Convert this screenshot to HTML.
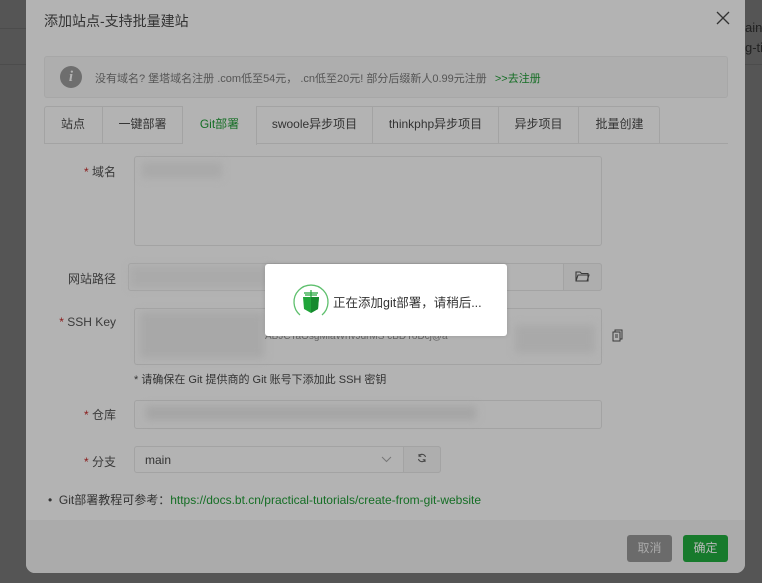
<!DOCTYPE html>
<html><head><meta charset="utf-8"><style>
*{box-sizing:border-box;margin:0;padding:0}
html,body{background:#555}
body{width:762px;height:583px;overflow:hidden;font-family:"Liberation Sans","Noto Sans CJK SC",sans-serif;position:relative;font-size:12px;color:#3a3a3a}
.a{position:absolute}
.bgline{position:absolute;left:0;width:762px;height:1px;background:#4c4c4c}
.dlg{position:absolute;left:26px;top:-10px;width:719px;height:583px;background:#b3b3b3;border-radius:9px;overflow:hidden}
.inp{position:absolute;border:1px solid #a3a3a3;border-radius:3px;background:#b3b3b3}
.blur{position:absolute;background:#a9a9a9;filter:blur(4px)}
.lbl{position:absolute;text-align:right;width:80px;font-size:12px;color:#3a3a3a}
.lbl b{color:#8a1a1a;font-weight:normal}
.tab{position:absolute;top:106px;height:38px;line-height:37px;text-align:center;font-size:12px;border-right:1px solid #a3a3a3;color:#333}
</style></head><body>
<div class="bgline" style="top:28px"></div>
<div class="bgline" style="top:64px"></div>
<div class="a" style="left:745px;top:20px;font-size:13px;color:#222;white-space:nowrap">ain.v</div>
<div class="a" style="left:745px;top:40px;font-size:13px;color:#222;white-space:nowrap">g-ti</div>
<div class="dlg"></div>
<div class="a" style="left:26px;top:520px;width:719px;height:53px;background:#ababab;border-radius:0 0 9px 9px"></div>
<div class="a" style="left:44px;top:11px;font-size:14px;color:#333">添加站点-支持批量建站</div>
<svg class="a" style="left:716px;top:11px" width="14" height="14" viewBox="0 0 14 14"><path d="M1 1L13 13M13 1L1 13" stroke="#333" stroke-width="1.3"/></svg>
<div class="a" style="left:44px;top:56px;width:684px;height:42px;background:#aeaeae;border:1px solid #a7a7a7;border-radius:3px"></div>
<div class="a" style="left:60px;top:66px;width:22px;height:22px;border-radius:50%;background:#6e6e6e;color:#b3b3b3;font:italic bold 15px 'Liberation Serif',serif;text-align:center;line-height:22px">i</div>
<div class="a" style="left:95px;top:70px;font-size:11px;color:#555">没有域名? 堡塔域名注册 .com低至54元， .cn低至20元! 部分后缀新人0.99元注册 <span style="color:#156e25;margin-left:5px">&gt;&gt;去注册</span></div>
<div class="a" style="left:44px;top:106px;width:616px;height:38px;border:1px solid #a3a3a3;border-bottom:none;border-radius:3px 3px 0 0"></div>
<div class="a" style="left:44px;top:143px;width:684px;height:1px;background:#a3a3a3"></div>
<div class="tab" style="left:44px;width:59px">站点</div>
<div class="tab" style="left:103px;width:80px">一键部署</div>
<div class="tab" style="left:183px;width:74px;color:#156e25;background:#b3b3b3;height:39px">Git部署</div>
<div class="tab" style="left:257px;width:116px">swoole异步项目</div>
<div class="tab" style="left:373px;width:126px">thinkphp异步项目</div>
<div class="tab" style="left:499px;width:80px">异步项目</div>
<div class="tab" style="left:579px;width:81px;border-right:none">批量创建</div>

<div class="lbl" style="left:36px;top:163px"><b>*</b> 域名</div>
<div class="inp" style="left:134px;top:156px;width:468px;height:90px"></div>
<div class="blur" style="left:142px;top:162px;width:80px;height:16px"></div>

<div class="lbl" style="left:36px;top:270px">网站路径</div>
<div class="inp" style="left:128px;top:263px;width:474px;height:28px"></div>
<div class="blur" style="left:130px;top:266px;width:140px;height:22px;background:#aaa"></div>
<div class="a" style="left:563px;top:263px;width:39px;height:28px;border:1px solid #a3a3a3;background:#aeaeae;border-radius:0 3px 3px 0"></div>
<svg class="a" style="left:575px;top:270px" width="15" height="13" viewBox="0 0 15 13"><path d="M1 2h4l1.5 1.5H13V11H1z M1 11l2-6h11l-2 6" fill="none" stroke="#3a3a3a" stroke-width="1.1"/></svg>

<div class="lbl" style="left:36px;top:315px"><b>*</b> SSH Key</div>
<div class="inp" style="left:134px;top:308px;width:468px;height:57px"></div>
<div class="blur" style="left:140px;top:312px;width:124px;height:46px;background:#a8a8a8"></div>
<div class="blur" style="left:515px;top:325px;width:80px;height:28px;background:#a9a9a9"></div>
<div class="a" style="left:265px;top:331px;font-size:10px;color:#666">ABJCTaOsgMlaWhvJdrMS cBDYoDcj@a</div>
<svg class="a" style="left:612px;top:329px" width="12" height="13" viewBox="0 0 12 13"><rect x="3" y="1" width="7" height="9" fill="none" stroke="#3a3a3a"/><rect x="1" y="3" width="7" height="9" fill="#b3b3b3" stroke="#3a3a3a"/><path d="M3 6h3M3 8h3" stroke="#3a3a3a"/></svg>
<div class="a" style="left:134px;top:371px;font-size:11px;color:#333">* 请确保在 Git 提供商的 Git 账号下添加此 SSH 密钥</div>

<div class="lbl" style="left:36px;top:406px"><b>*</b> 仓库</div>
<div class="inp" style="left:134px;top:400px;width:468px;height:29px"></div>
<div class="blur" style="left:146px;top:406px;width:330px;height:14px;background:#a5a5a5"></div>

<div class="lbl" style="left:36px;top:453px"><b>*</b> 分支</div>
<div class="inp" style="left:134px;top:446px;width:307px;height:27px"></div>
<div class="a" style="left:403px;top:446px;width:38px;height:27px;border:1px solid #a3a3a3;background:#aeaeae;border-radius:0 3px 3px 0"></div>
<div class="a" style="left:145px;top:453px;font-size:12px;color:#333">main</div>
<svg class="a" style="left:381px;top:456px" width="11" height="7" viewBox="0 0 11 7"><path d="M1 1l4.5 4.5L10 1" fill="none" stroke="#777"/></svg>
<svg class="a" style="left:417px;top:453px" width="10" height="10" viewBox="0 0 10 10"><path d="M8.5 4A3.6 3.6 0 0 0 2 3M1.5 6A3.6 3.6 0 0 0 8 7" fill="none" stroke="#444" stroke-width="1.1"/><path d="M2 1v2.3h2.3M8 9V6.7H5.7" fill="none" stroke="#444"/></svg>

<div class="a" style="left:48px;top:491px;font-size:12px;color:#333">•&nbsp;&nbsp;Git部署教程可参考：<span style="color:#156e25">https://docs.bt.cn/practical-tutorials/create-from-git-website</span></div>

<div class="a" style="left:627px;top:535px;width:45px;height:27px;background:#6b6b6b;border-radius:3px;color:#aaa;text-align:center;line-height:27px;font-size:12px">取消</div>
<div class="a" style="left:683px;top:535px;width:45px;height:27px;background:#177a2c;border-radius:3px;color:#bbb;text-align:center;line-height:27px;font-size:12px">确定</div>

<div class="a" style="left:265px;top:264px;width:242px;height:72px;background:#fff;border-radius:3px;box-shadow:0 0 4px rgba(0,0,0,.15)"></div>
<svg class="a" style="left:292px;top:283px" width="38" height="36" viewBox="0 0 38 36"><path d="M8 32A17 17 0 1 1 30 32" fill="none" stroke="#5fc06e" stroke-width="1.3"/><path d="M11 14h16l-1 12-7 4-7-4z" fill="#20a53a"/><path d="M19 14v16l7-4 1-12z" fill="#168a2e"/><path d="M12 10h14M13 12h12M19 7v7" stroke="#20a53a" stroke-width="1.2"/></svg>
<div class="a" style="left:333px;top:292px;font-size:12.5px;color:#333">正在添加git部署，请稍后...</div>
</body></html>
